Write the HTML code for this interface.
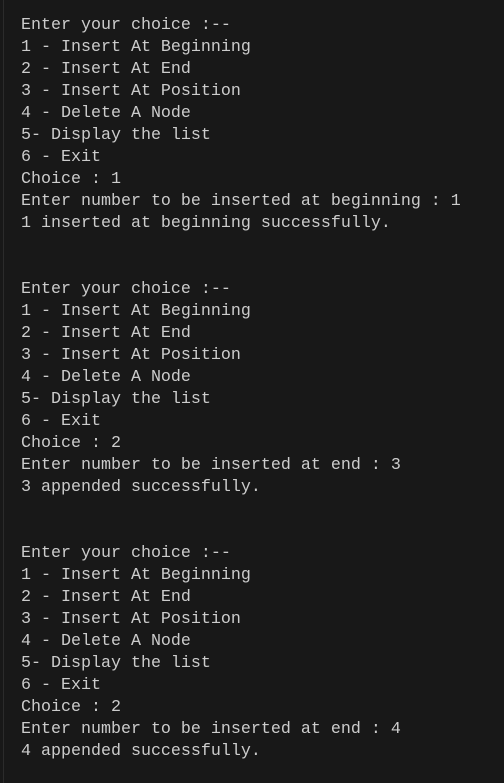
<!DOCTYPE html>
<html><head><style>
html,body{margin:0;padding:0;background:#181818;width:504px;height:783px;overflow:hidden}
.l{position:absolute;left:3px;top:0;width:1px;height:783px;background:#2b2b2b}
pre{position:absolute;left:21px;top:15px;margin:0;font-family:"Liberation Mono",monospace;font-size:16.67px;line-height:22px;color:#cccccc}
</style></head><body><div class="l"></div><pre>Enter your choice :--
1 - Insert At Beginning
2 - Insert At End
3 - Insert At Position
4 - Delete A Node
5- Display the list
6 - Exit
Choice : 1
Enter number to be inserted at beginning : 1
1 inserted at beginning successfully.


Enter your choice :--
1 - Insert At Beginning
2 - Insert At End
3 - Insert At Position
4 - Delete A Node
5- Display the list
6 - Exit
Choice : 2
Enter number to be inserted at end : 3
3 appended successfully.


Enter your choice :--
1 - Insert At Beginning
2 - Insert At End
3 - Insert At Position
4 - Delete A Node
5- Display the list
6 - Exit
Choice : 2
Enter number to be inserted at end : 4
4 appended successfully.</pre></body></html>
